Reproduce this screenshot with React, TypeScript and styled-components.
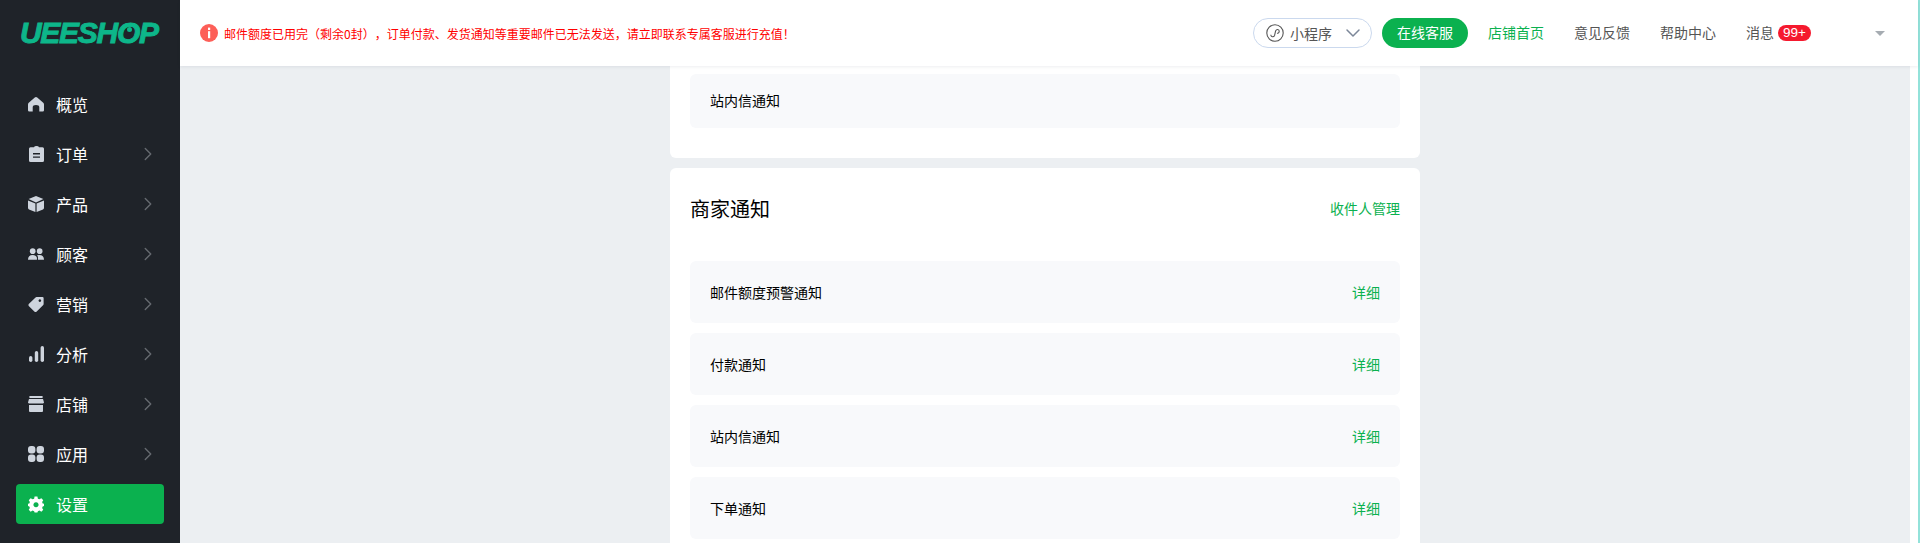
import styled, { createGlobalStyle } from "styled-components";
import { ChevronRight, ChevronDown } from "lucide-react";
import type { ReactNode } from "react";

const FONT = `"Noto Sans CJK SC", "Liberation Sans", sans-serif`;
const GREEN = "#0bb14f";

const GlobalStyle = createGlobalStyle`
  html, body {
    margin: 0;
    padding: 0;
    height: 100%;
    overflow: hidden;
    background: #eceff2;
    font-family: ${FONT};
    text-spacing-trim: space-all;
  }
  * { box-sizing: border-box; }
`;

const Page = styled.div`
  display: flex;
  width: 1920px;
  height: 543px;
  overflow: hidden;
`;

const Sidebar = styled.aside`
  flex: 0 0 180px;
  background: #1f2329;
  display: flex;
  flex-direction: column;
`;

const LogoBox = styled.div`
  height: 84px;
  padding: 15px 0 0 20px;
`;

const LogoText = styled.span`
  font-family: "Liberation Sans", sans-serif;
  font-style: italic;
  font-weight: 700;
  font-size: 30px;
  line-height: 36px;
  letter-spacing: -1.3px;
  color: #0db68a;
  -webkit-text-stroke: 0.9px #0db68a;
`;

const LogoO = styled.span`
  position: relative;

  &::after {
    content: "";
    position: absolute;
    left: 10px;
    top: 11px;
    width: 5px;
    height: 5px;
    border-radius: 50%;
    background: #0db68a;
  }
`;

const Nav = styled.nav`
  display: flex;
  flex-direction: column;
  gap: 10px;
  padding: 0 16px;
`;

const NavItem = styled.a<{ $active?: boolean }>`
  display: flex;
  align-items: center;
  height: 40px;
  padding: 0 12px;
  border-radius: 4px;
  color: #fff;
  font-size: 16px;
  background: ${(p) => (p.$active ? GREEN : "transparent")};

  svg.arrow {
    margin-left: auto;
    margin-right: -7px;
    color: #666a70;
  }
`;

const NavIcon = styled.span`
  display: flex;
  align-items: center;
  justify-content: center;
  width: 16px;
  height: 16px;
  margin-right: 12px;
  color: #ced4dd;
`;

const Main = styled.div`
  flex: 1;
  min-width: 0;
  display: flex;
  flex-direction: column;
  border-right: 2px solid #93e2da;
`;

const Header = styled.header`
  position: relative;
  z-index: 2;
  flex: 0 0 66px;
  display: flex;
  align-items: center;
  background: #fff;
  padding: 0 33px 0 20px;
  box-shadow: 0 1px 3px rgba(30, 40, 60, 0.08);
`;

const Notice = styled.div`
  display: flex;
  align-items: center;
  gap: 6px;
  color: #ff0000;
  font-size: 12px;
`;

const HeaderRight = styled.div`
  margin-left: auto;
  display: flex;
  align-items: center;
`;

const MiniPill = styled.div`
  display: flex;
  align-items: center;
  width: 119px;
  height: 30px;
  padding: 0 6px 0 12px;
  border: 1px solid #cbd9ee;
  border-radius: 15px;
  color: #555;
  font-size: 14px;
  gap: 6px;

  svg.arrow {
    margin-left: auto;
    color: #7c8799;
  }
`;

const ServiceButton = styled.button`
  width: 86px;
  height: 30px;
  margin: 0 20px 0 10px;
  padding: 0 0 2px;
  border: none;
  border-radius: 15px;
  background: ${GREEN};
  color: #fff;
  font-family: inherit;
  font-size: 14px;
`;

const TopLink = styled.a<{ $green?: boolean }>`
  font-size: 14px;
  margin: 0 30px 2px 0;
  color: ${(p) => (p.$green ? GREEN : "#555")};
`;

const MessageLabel = styled(TopLink)`
  margin-right: 4px;
`;

const Badge = styled.span`
  display: block;
  width: 33px;
  height: 16px;
  border-radius: 8px;
  background: #f5192e;
  color: #fff;
  font-size: 13.5px;
  line-height: 16px;
  text-align: center;
  font-family: "Liberation Sans", sans-serif;
`;

const Caret = styled.span`
  margin-left: 64px;
  width: 0;
  height: 0;
  border-left: 5px solid transparent;
  border-right: 5px solid transparent;
  border-top: 5px solid #a6acb2;
`;

const Content = styled.main`
  flex: 1;
  overflow: hidden;
  display: flex;
  flex-direction: column;
  align-items: center;
  gap: 10px;
  border-right: 8px solid #fff;
`;

const Card = styled.section<{ $top?: boolean }>`
  flex: none;
  width: 750px;
  padding: ${(p) => (p.$top ? "8px 20px 30px" : "0 20px 20px")};
  background: #fff;
  border-radius: ${(p) => (p.$top ? "0 0 6px 6px" : "6px")};
  display: flex;
  flex-direction: column;
  gap: 10px;
`;

const CardHead = styled.div`
  height: 80px;
  display: flex;
  align-items: center;
  justify-content: space-between;
  margin-bottom: 3px;
`;

const CardTitle = styled.h2`
  margin: 0;
  font-size: 20px;
  font-weight: 400;
  color: #000;
`;

const GreenLink = styled.a`
  font-size: 14px;
  color: ${GREEN};
`;

const Row = styled.div<{ $short?: boolean }>`
  height: ${(p) => (p.$short ? "54px" : "62px")};
  padding: 0 20px ${(p) => (p.$short ? "2px" : "0")};
  display: flex;
  align-items: center;
  justify-content: space-between;
  background: #f8f9fb;
  border-radius: 6px;
  font-size: 14px;
  color: #000;
`;

const navItems: { label: string; icon: ReactNode; arrow?: boolean; active?: boolean }[] = [
  {
    label: "概览",
    icon: (
      <svg width="17" height="16" viewBox="0 0 17 16" fill="currentColor">
        <path d="M8.5 0.5 Q9.2 0.5 9.8 1 L16.2 6.6 Q17 7.4 17 8.4 V14.6 Q17 16 15.6 16 H12 V11.5 Q12 9 8.5 9 Q5 9 5 11.5 V16 H1.4 Q0 16 0 14.6 V8.4 Q0 7.4 0.8 6.6 L7.2 1 Q7.8 0.5 8.5 0.5Z" />
      </svg>
    ),
  },
  {
    label: "订单",
    arrow: true,
    icon: (
      <svg width="15" height="16" viewBox="0 0 15 16" fill="currentColor">
        <path fillRule="evenodd" d="M1.5 1.2 H5 Q5.3 0 7.5 0 Q9.7 0 10 1.2 H13.5 Q15 1.2 15 2.7 V14.5 Q15 16 13.5 16 H1.5 Q0 16 0 14.5 V2.7 Q0 1.2 1.5 1.2Z M4 7 V8.4 H11 V7Z M4 10.4 V11.8 H11 V10.4Z" />
      </svg>
    ),
  },
  {
    label: "产品",
    arrow: true,
    icon: (
      <svg width="16" height="16" viewBox="0 0 16 16" fill="currentColor">
        <path d="M8 0 L15.4 3 L8 6.4 L0.6 3Z M0 4.4 L7.4 7.6 V16 L1 13.4 Q0 13 0 12Z M16 4.4 V12 Q16 13 15 13.4 L8.6 16 V7.6Z" />
      </svg>
    ),
  },
  {
    label: "顾客",
    arrow: true,
    icon: (
      <svg width="17" height="14" viewBox="0 0 17 14" fill="currentColor">
        <circle cx="5" cy="4" r="3" />
        <circle cx="12.4" cy="4" r="3" />
        <path d="M0 13 Q0 8 5 8 Q8.5 8 9.5 11 V13Z M10.6 13 V10.5 Q10.4 9 9.5 8.3 Q10.6 8 12 8 Q17 8 17 13Z" />
      </svg>
    ),
  },
  {
    label: "营销",
    arrow: true,
    icon: (
      <svg width="17" height="17" viewBox="0 0 17 17" fill="currentColor">
        <path fillRule="evenodd" d="M9 0.6 H15.4 Q16.6 0.6 16.6 1.8 V8 Q16.6 8.6 16.2 9 L9 16.2 Q8 17 7 16.2 L0.8 10 Q0 9 0.8 8 L8 1 Q8.4 0.6 9 0.6Z M12.6 3 A1.4 1.4 0 1 0 12.61 3Z" />
      </svg>
    ),
  },
  {
    label: "分析",
    arrow: true,
    icon: (
      <svg width="15" height="16" viewBox="0 0 15 16" fill="currentColor">
        <rect x="0" y="10" width="3.4" height="6" rx="1.7" />
        <rect x="5.8" y="5" width="3.4" height="11" rx="1.7" />
        <rect x="11.6" y="0" width="3.4" height="16" rx="1.7" />
      </svg>
    ),
  },
  {
    label: "店铺",
    arrow: true,
    icon: (
      <svg width="16" height="16" viewBox="0 0 16 16" fill="currentColor">
        <rect x="1.4" y="0" width="13.2" height="2" rx="0.5" />
        <path d="M1 3 H15 L16 6.6 Q16 7.4 15 7.4 H1 Q0 7.4 0 6.6Z" />
        <path d="M1 9 H15 V15 Q15 16 14 16 H2 Q1 16 1 15Z" />
      </svg>
    ),
  },
  {
    label: "应用",
    arrow: true,
    icon: (
      <svg width="16" height="16" viewBox="0 0 16 16" fill="currentColor">
        <rect x="0" y="0" width="7.4" height="7.4" rx="3" />
        <rect x="8.6" y="0" width="7.4" height="7.4" rx="3" />
        <rect x="0" y="8.6" width="7.4" height="7.4" rx="3" />
        <rect x="8.6" y="8.6" width="7.4" height="7.4" rx="3" />
      </svg>
    ),
  },
  {
    label: "设置",
    active: true,
    icon: (
      <svg width="17" height="17" viewBox="0 0 17 17" fill="#fff">
        <path
          fillRule="evenodd"
          d="M7 0 H10 L10.5 2.3 L12.1 3 L14.2 1.8 L16.2 3.9 L15 5.9 L15.6 7.4 L17 7.8 V10.2 L15.6 10.6 L15 12.1 L16.2 14.1 L14.2 16.2 L12.1 15 L10.5 15.7 L10 17 H7 L6.5 15.7 L4.9 15 L2.8 16.2 L0.8 14.1 L2 12.1 L1.4 10.6 L0 10.2 V7.8 L1.4 7.4 L2 5.9 L0.8 3.9 L2.8 1.8 L4.9 3 L6.5 2.3Z M8.5 6 A2.7 2.7 0 1 0 8.51 6Z"
        />
      </svg>
    ),
  },
];

const merchantRows = ["邮件额度预警通知", "付款通知", "站内信通知", "下单通知"];

const App = () => {
  return (
    <Page>
      <GlobalStyle />
      <Sidebar>
        <LogoBox>
          <LogoText>
            UEESH<LogoO>O</LogoO>P
          </LogoText>
        </LogoBox>
        <Nav>
          {navItems.map((item) => (
            <NavItem key={item.label} $active={item.active}>
              <NavIcon>{item.icon}</NavIcon>
              {item.label}
              {item.arrow && <ChevronRight className="arrow" size={22} strokeWidth={1.5} />}
            </NavItem>
          ))}
        </Nav>
      </Sidebar>
      <Main>
        <Header>
          <Notice>
            <svg width="18" height="18" viewBox="0 0 18 18">
              <circle cx="9" cy="9" r="9" fill="#fd5f58" />
              <rect x="8" y="3.6" width="2.2" height="2.4" fill="#fff" />
              <rect x="8" y="7.2" width="2.2" height="7" fill="#fff" />
            </svg>
            邮件额度已用完（剩余0封），订单付款、发货通知等重要邮件已无法发送，请立即联系专属客服进行充值！
          </Notice>
          <HeaderRight>
            <MiniPill>
              <svg width="18" height="18" viewBox="0 0 18 18" fill="none" stroke="#555" strokeWidth="1.1">
                <circle cx="9" cy="9" r="8.2" />
                <path d="M4.8 10.8 C4.8 13 7.6 13.4 8.6 11.4 L9.6 7 C10.4 4.8 13.2 5 13.2 7.2 C13.2 8.6 12 9.4 11 9.2" />
              </svg>
              小程序
              <ChevronDown className="arrow" size={24} strokeWidth={1.5} />
            </MiniPill>
            <ServiceButton>在线客服</ServiceButton>
            <TopLink $green>店铺首页</TopLink>
            <TopLink>意见反馈</TopLink>
            <TopLink>帮助中心</TopLink>
            <MessageLabel>消息</MessageLabel>
            <Badge>99+</Badge>
            <Caret />
          </HeaderRight>
        </Header>
        <Content>
          <Card $top>
            <Row $short>站内信通知</Row>
          </Card>
          <Card>
            <CardHead>
              <CardTitle>商家通知</CardTitle>
              <GreenLink>收件人管理</GreenLink>
            </CardHead>
            {merchantRows.map((name) => (
              <Row key={name}>
                {name}
                <GreenLink>详细</GreenLink>
              </Row>
            ))}
          </Card>
        </Content>
      </Main>
    </Page>
  );
};

export default App;
